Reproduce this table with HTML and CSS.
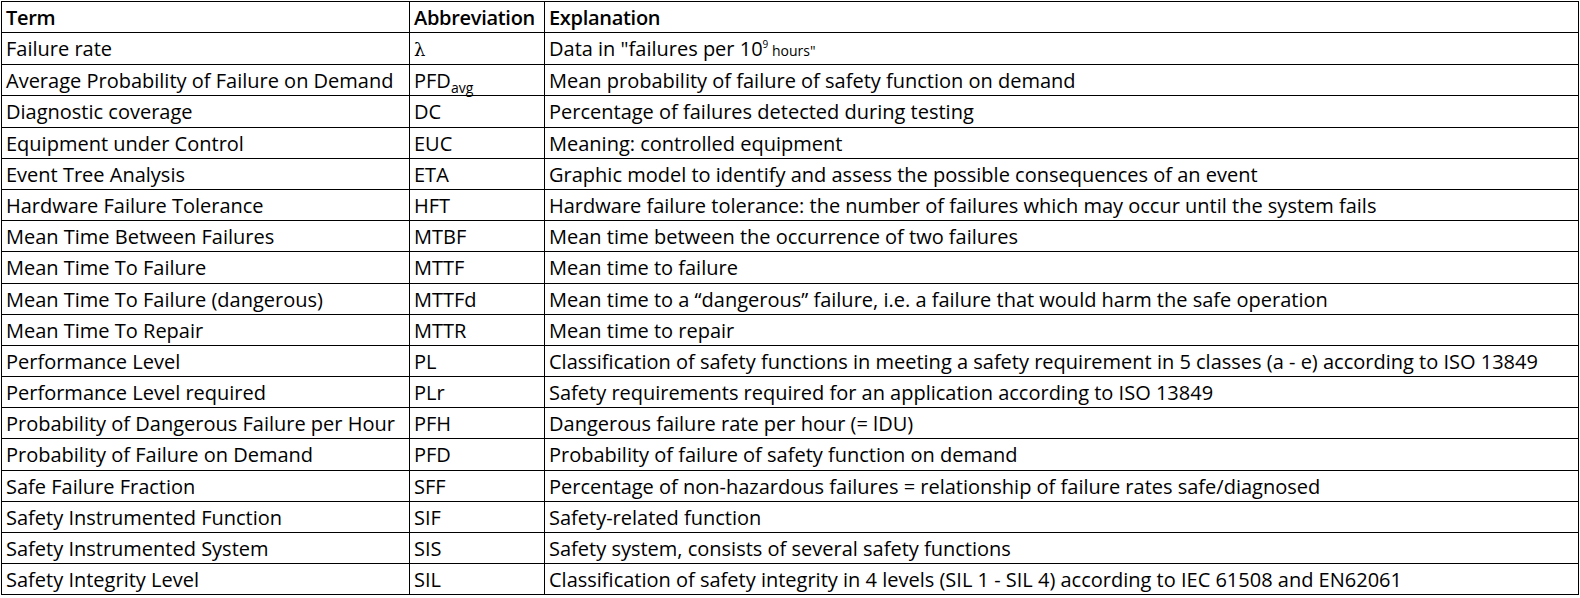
FILE: index.html
```html
<!DOCTYPE html>
<html>
<head>
<meta charset="utf-8">
<link rel="stylesheet" href="styles.css">
</head>
<body>
<table class="gloss">
<colgroup><col class="c-term"><col class="c-abbr"><col class="c-expl"></colgroup>
<thead>
<tr class="head"><th>Term</th><th>Abbreviation</th><th>Explanation</th></tr>
</thead>
<tbody>
<tr><td>Failure rate</td><td><span class="lambda">λ</span></td><td>Data in "failures per 10<sup class="exp">9</sup><span class="small"> hours"</span></td></tr>
<tr><td>Average Probability of Failure on Demand</td><td>PFD<sub class="sub">avg</sub></td><td>Mean probability of failure of safety function on demand</td></tr>
<tr><td>Diagnostic coverage</td><td>DC</td><td>Percentage of failures detected during testing</td></tr>
<tr><td>Equipment under Control</td><td>EUC</td><td>Meaning: controlled equipment</td></tr>
<tr><td>Event Tree Analysis</td><td>ETA</td><td>Graphic model to identify and assess the possible consequences of an event</td></tr>
<tr><td>Hardware Failure Tolerance</td><td>HFT</td><td>Hardware failure tolerance: the number of failures which may occur until the system fails</td></tr>
<tr><td>Mean Time Between Failures</td><td>MTBF</td><td>Mean time between the occurrence of two failures</td></tr>
<tr><td>Mean Time To Failure</td><td>MTTF</td><td>Mean time to failure</td></tr>
<tr><td>Mean Time To Failure (dangerous)</td><td>MTTFd</td><td>Mean time to a “dangerous” failure, i.e. a failure that would harm the safe operation</td></tr>
<tr><td>Mean Time To Repair</td><td>MTTR</td><td>Mean time to repair</td></tr>
<tr><td>Performance Level</td><td>PL</td><td>Classification of safety functions in meeting a safety requirement in 5 classes (a - e) according to ISO 13849</td></tr>
<tr><td>Performance Level required</td><td>PLr</td><td>Safety requirements required for an application according to ISO 13849</td></tr>
<tr><td>Probability of Dangerous Failure per Hour</td><td>PFH</td><td>Dangerous failure rate per hour (= lDU)</td></tr>
<tr><td>Probability of Failure on Demand</td><td>PFD</td><td>Probability of failure of safety function on demand</td></tr>
<tr><td>Safe Failure Fraction</td><td>SFF</td><td>Percentage of non-hazardous failures = relationship of failure rates safe/diagnosed</td></tr>
<tr><td>Safety Instrumented Function</td><td>SIF</td><td>Safety-related function</td></tr>
<tr><td>Safety Instrumented System</td><td>SIS</td><td>Safety system, consists of several safety functions</td></tr>
<tr><td>Safety Integrity Level</td><td>SIL</td><td>Classification of safety integrity in 4 levels (SIL 1 - SIL 4) according to IEC 61508 and EN62061</td></tr>
</tbody>
</table>
</body>
</html>
```
FILE: styles.css
```css
html, body {
  margin: 0;
  padding: 0;
  background: #fff;
}
body {
  padding: 1px 0 0 1px;
}
.gloss {
  border-collapse: collapse;
  table-layout: fixed;
  width: 1577px;
  font-family: "Open Sans", Lato, sans-serif;
  font-size: 20px;
  color: #000;
}
.c-term { width: 408px; }
.c-abbr { width: 135px; }
.c-expl { width: 1034px; }
.gloss th, .gloss td {
  border: 1px solid #000;
  height: 31.2px;
  padding: 2px 0 0 4px;
  box-sizing: border-box;
  text-align: left;
  vertical-align: top;
  line-height: 27px;
  white-space: nowrap;
}
.gloss th {
  font-weight: 600;
  letter-spacing: -0.3px;
}
.lambda {
  font-family: "DejaVu Serif", serif;
  font-size: 18px;
}
.exp {
  font-size: 10px;
  vertical-align: 8px;
  line-height: 0;
}
.small {
  font-size: 14px;
}
.sub {
  font-size: 14px;
  vertical-align: -5px;
  line-height: 0;
}
```
